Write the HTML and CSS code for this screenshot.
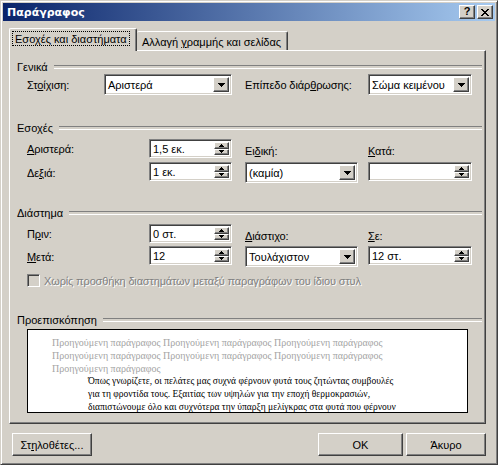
FILE: index.html
```html
<!DOCTYPE html>
<html lang="el">
<head>
<meta charset="utf-8">
<title>Παράγραφος</title>
<link rel="stylesheet" href="styles.css">
</head>
<body>
<div class="window">
  <div class="titlebar">
    <span class="title">Παράγραφος</span>
    <div class="tb-buttons">
      <div class="tb-btn help">?</div>
      <div class="tb-btn close">
        <svg width="8" height="7" viewBox="0 0 8 7"><path d="M0 0h2v1H0zM6 0h2v1H6zM1 1h2v1H1zM5 1h2v1H5zM2 2h4v1H2zM3 3h2v1H3zM2 4h4v1H2zM1 5h2v1H1zM5 5h2v1H5zM0 6h2v1H0zM6 6h2v1H6z" fill="#000"/></svg>
      </div>
    </div>
  </div>
  <div class="content">
    <div class="tabs">
      <div class="tab active"><span class="focus"><span>Εσο<u>χ</u>ές και διαστήματα</span></span></div>
      <div class="tab second"><span>Αλλαγή <u>γ</u>ραμμής και σελίδας</span></div>
    </div>
    <div class="panel">
      <div class="group-title first">Γενικά</div>
      <div class="row-general">
        <span class="lbl w77">Στ<u>ο</u>ίχιση:</span>
        <div class="field combo w128"><span class="val">Αριστερά</span><span class="drop"><svg width="7" height="4" viewBox="0 0 7 4"><path d="M0 0h7v1H0zM1 1h5v1H1zM2 2h3v1H2zM3 3h1v1H3z"/></svg></span></div>
        <span class="lbl w123 ml13">Επίπεδο διάρ<u>θ</u>ρωσης:</span>
        <div class="field combo w104"><span class="val">Σώμα κειμένου</span><span class="drop"><svg width="7" height="4" viewBox="0 0 7 4"><path d="M0 0h7v1H0zM1 1h5v1H1zM2 2h3v1H2zM3 3h1v1H3z"/></svg></span></div>
      </div>

      <div class="group-title sec">Εσοχές</div>
      <div class="grid g-indent">
        <span class="lbl"><u>Α</u>ριστερά:</span>
        <div class="field spin"><span class="val">1,5 εκ.</span><span class="spins"><span class="sb"><svg width="5" height="3" viewBox="0 0 5 3"><path d="M2 0h1v1H2zM1 1h3v1H1zM0 2h5v1H0z"/></svg></span><span class="sb"><svg width="5" height="3" viewBox="0 0 5 3"><path d="M0 0h5v1H0zM1 1h3v1H1zM2 2h1v1H2z"/></svg></span></span></div>
        <span></span>
        <span class="lbl top">Ει<u>δ</u>ική:</span>
        <span></span>
        <span class="lbl top"><u>Κ</u>ατά:</span>

        <span class="lbl">Δε<u>ξ</u>ιά:</span>
        <div class="field spin"><span class="val">1 εκ.</span><span class="spins"><span class="sb"><svg width="5" height="3" viewBox="0 0 5 3"><path d="M2 0h1v1H2zM1 1h3v1H1zM0 2h5v1H0z"/></svg></span><span class="sb"><svg width="5" height="3" viewBox="0 0 5 3"><path d="M0 0h5v1H0zM1 1h3v1H1zM2 2h1v1H2z"/></svg></span></span></div>
        <span></span>
        <div class="field combo"><span class="val">(καμία)</span><span class="drop"><svg width="7" height="4" viewBox="0 0 7 4"><path d="M0 0h7v1H0zM1 1h5v1H1zM2 2h3v1H2zM3 3h1v1H3z"/></svg></span></div>
        <span></span>
        <div class="field spin"><span class="val"></span><span class="spins"><span class="sb"><svg width="5" height="3" viewBox="0 0 5 3"><path d="M2 0h1v1H2zM1 1h3v1H1zM0 2h5v1H0z"/></svg></span><span class="sb"><svg width="5" height="3" viewBox="0 0 5 3"><path d="M0 0h5v1H0zM1 1h3v1H1zM2 2h1v1H2z"/></svg></span></span></div>
      </div>

      <div class="group-title sec2">Διάστημα</div>
      <div class="grid g-space">
        <span class="lbl">Π<u>ρ</u>ιν:</span>
        <div class="field spin"><span class="val">0 στ.</span><span class="spins"><span class="sb"><svg width="5" height="3" viewBox="0 0 5 3"><path d="M2 0h1v1H2zM1 1h3v1H1zM0 2h5v1H0z"/></svg></span><span class="sb"><svg width="5" height="3" viewBox="0 0 5 3"><path d="M0 0h5v1H0zM1 1h3v1H1zM2 2h1v1H2z"/></svg></span></span></div>
        <span></span>
        <span class="lbl top"><u>Δ</u>ιάστιχο:</span>
        <span></span>
        <span class="lbl top"><u>Σ</u>ε:</span>

        <span class="lbl"><u>Μ</u>ετά:</span>
        <div class="field spin"><span class="val">12</span><span class="spins"><span class="sb"><svg width="5" height="3" viewBox="0 0 5 3"><path d="M2 0h1v1H2zM1 1h3v1H1zM0 2h5v1H0z"/></svg></span><span class="sb"><svg width="5" height="3" viewBox="0 0 5 3"><path d="M0 0h5v1H0zM1 1h3v1H1zM2 2h1v1H2z"/></svg></span></span></div>
        <span></span>
        <div class="field combo"><span class="val">Τουλάχιστον</span><span class="drop"><svg width="7" height="4" viewBox="0 0 7 4"><path d="M0 0h7v1H0zM1 1h5v1H1zM2 2h3v1H2zM3 3h1v1H3z"/></svg></span></div>
        <span></span>
        <div class="field spin"><span class="val">12 στ.</span><span class="spins"><span class="sb"><svg width="5" height="3" viewBox="0 0 5 3"><path d="M2 0h1v1H2zM1 1h3v1H1zM0 2h5v1H0z"/></svg></span><span class="sb"><svg width="5" height="3" viewBox="0 0 5 3"><path d="M0 0h5v1H0zM1 1h3v1H1zM2 2h1v1H2z"/></svg></span></span></div>
      </div>

      <div class="check-row">
        <span class="checkbox"></span>
        <span class="disabled">Χωρίς προσθήκη διαστημάτων μεταξύ παραγράφων του ίδιου στυλ</span>
      </div>

      <div class="group-title sec3">Προεπισκόπηση</div>
      <div class="preview">
        <div class="pv-prev">Προηγούμενη παράγραφος Προηγούμενη παράγραφος Προηγούμενη παράγραφος</div>
        <div class="pv-prev">Προηγούμενη παράγραφος Προηγούμενη παράγραφος Προηγούμενη παράγραφος</div>
        <div class="pv-prev">Προηγούμενη παράγραφος</div>
        <div class="pv-cur">Όπως γνωρίζετε, οι πελάτες μας συχνά φέρνουν φυτά τους ζητώντας συμβουλές</div>
        <div class="pv-cur">για τη φροντίδα τους. Εξαιτίας των υψηλών για την εποχή θερμοκρασιών,</div>
        <div class="pv-cur">διαπιστώνουμε όλο και συχνότερα την ύπαρξη μελίγκρας στα φυτά που φέρνουν</div>
      </div>
    </div>
    <div class="actions">
      <div class="btn tabs-btn"><span>Στ<u>η</u>λοθέτες...</span></div>
      <div class="spacer"></div>
      <div class="btn ok">OK</div>
      <div class="btn cancel">Άκυρο</div>
    </div>
  </div>
</div>
</body>
</html>
```

FILE: styles.css
```css
* { box-sizing: border-box; }
html, body { margin: 0; padding: 0; background: #D4D0C8; }
body {
  font-family: "Liberation Sans", Arial, sans-serif;
  font-size: 11px;
  color: #000;
}
u { text-decoration: underline; text-underline-offset: 1px; }

.window {
  width: 498px;
  height: 465px;
  border: 1px solid;
  border-color: #D4D0C8 #404040 #404040 #D4D0C8;
  box-shadow: inset 1px 1px #fff, inset -1px -1px #808080;
  padding: 2px;
  display: flex;
  flex-direction: column;
  background: #D4D0C8;
}

.titlebar {
  height: 18px;
  flex: none;
  background: linear-gradient(to right, #0A246A, #A6CAF0);
  display: flex;
  align-items: center;
  justify-content: space-between;
  padding: 0 2px 0 4px;
}
.title {
  color: #fff;
  font: bold 11px "DejaVu Sans", sans-serif;
}
.tb-buttons { display: flex; gap: 2px; }
.tb-btn {
  width: 16px;
  height: 14px;
  background: #D4D0C8;
  border: 1px solid;
  border-color: #fff #404040 #404040 #fff;
  box-shadow: inset -1px -1px #808080;
  display: flex;
  align-items: center;
  justify-content: center;
  font: bold 11px "Liberation Sans", Arial, sans-serif;
  line-height: 1;
}
.tb-btn.help { padding-bottom: 1px; }

.content {
  flex: 1;
  padding: 7px 9px 0 6px;
  display: flex;
  flex-direction: column;
}

.tabs {
  display: flex;
  height: 22px;
  align-items: flex-end;
  flex: none;
}
.tab {
  height: 19px;
  display: flex;
  align-items: center;
  white-space: nowrap;
  border-top: 1px solid #fff;
  border-left: 1px solid #fff;
  border-right: 1px solid #404040;
  box-shadow: inset -1px 0 #808080;
  border-radius: 2px 2px 0 0;
  background: #D4D0C8;
}
.tab.active {
  width: 128px;
  height: 23px;
  margin-bottom: -1px;
  position: relative;
  z-index: 1;
  padding: 0 0 3px 2px;
}
.tab.second {
  width: 151px;
  border-left: none;
  padding-left: 5px;
  padding-top: 1px;
}
.focus {
  border: 1px dotted #000;
  padding: 1px 2px 0 2px;
  height: 15px;
  display: flex;
  align-items: center;
}

.panel {
  height: 374px;
  flex: none;
  border: 1px solid;
  border-color: #fff #404040 #404040 #fff;
  box-shadow: inset -1px -1px #808080;
  display: flex;
  flex-direction: column;
}

.group-title {
  display: flex;
  align-items: center;
  height: 13px;
  margin-left: 7px;
  margin-right: 3px;
}
.group-title::after {
  content: "";
  flex: 1;
  height: 2px;
  border-top: 1px solid #808080;
  border-bottom: 1px solid #fff;
  margin-left: 6px;
}
.group-title.first { margin-top: 9px; }
.group-title.sec { margin-top: 26px; }
.group-title.sec2 { margin-top: 23px; }
.group-title.sec3 { margin-top: 26px; }

.lbl { white-space: nowrap; letter-spacing: -0.1px; }
.lbl.top { align-self: end; line-height: 13px; }

.row-general {
  display: flex;
  align-items: center;
  margin: 1px 0 0 17px;
  height: 21px;
}
.w77 { width: 77px; }
.w128 { width: 128px; }
.w123 { width: 123px; }
.w104 { width: 104px; }
.ml13 { margin-left: 13px; }

.grid {
  display: grid;
  grid-template-columns: 122px 83px 13px 113px 10px 104px;
  align-items: center;
  margin-left: 17px;
}
.g-indent { margin-top: 5px; grid-template-rows: 19px 21px; row-gap: 4px; }
.g-space { margin-top: 5px; grid-template-rows: 19px 21px; row-gap: 3px; }
.grid .field.spin { align-self: start; }

.field {
  background: #fff;
  border: 1px solid;
  border-color: #808080 #fff #fff #808080;
  box-shadow: inset 1px 1px #404040, inset -1px -1px #D4D0C8;
  display: flex;
  align-items: stretch;
  padding: 2px;
}
.field .val {
  flex: 1;
  display: flex;
  align-items: center;
  padding-left: 1px;
  white-space: nowrap;
  overflow: hidden;
}
.field.combo { height: 21px; }
.field.spin { height: 19px; }

.drop, .sb {
  background: #D4D0C8;
  border: 1px solid;
  border-color: #fff #404040 #404040 #fff;
  box-shadow: inset -1px -1px #808080;
  display: flex;
  align-items: center;
  justify-content: center;
}
.drop { width: 16px; }
.drop svg { fill: #000; }
.spins {
  width: 15px;
  display: flex;
  flex-direction: column;
}
.sb { flex: 1; }
.sb svg { fill: #000; }

.check-row {
  display: flex;
  align-items: center;
  margin: 7px 0 0 17px;
  height: 13px;
}
.checkbox {
  width: 13px;
  height: 13px;
  border: 1px solid;
  border-color: #808080 #fff #fff #808080;
  box-shadow: inset 1px 1px #404040, inset -1px -1px #D4D0C8;
  background: #D4D0C8;
}
.disabled {
  color: #808080;
  text-shadow: 1px 1px 0 #fff;
  margin-left: 4px;
  white-space: nowrap;
  letter-spacing: -0.15px;
}

.preview {
  margin: 3px 0 0 17px;
  width: 441px;
  height: 84px;
  background: #fff;
  border: 1px solid #000;
  padding-top: 6px;
  font-family: "Liberation Serif", "Times New Roman", serif;
  line-height: 13px;
  white-space: nowrap;
  overflow: hidden;
}
.pv-prev {
  color: #A4A4A4;
  font-size: 10px;
  padding-left: 24px;
}
.pv-cur {
  color: #000;
  font-size: 9.5px;
  padding-left: 60px;
}

.actions {
  display: flex;
  margin-top: 9px;
  height: 23px;
  gap: 3px;
}
.spacer { flex: 1; }
.btn {
  height: 23px;
  background: #D4D0C8;
  border: 1px solid;
  border-color: #fff #404040 #404040 #fff;
  box-shadow: inset -1px -1px #808080;
  display: flex;
  align-items: center;
  justify-content: center;
  white-space: nowrap;
}
.tabs-btn { width: 80px; margin-left: 3px; }
.ok { width: 85px; }
.cancel { width: 80px; }
```
